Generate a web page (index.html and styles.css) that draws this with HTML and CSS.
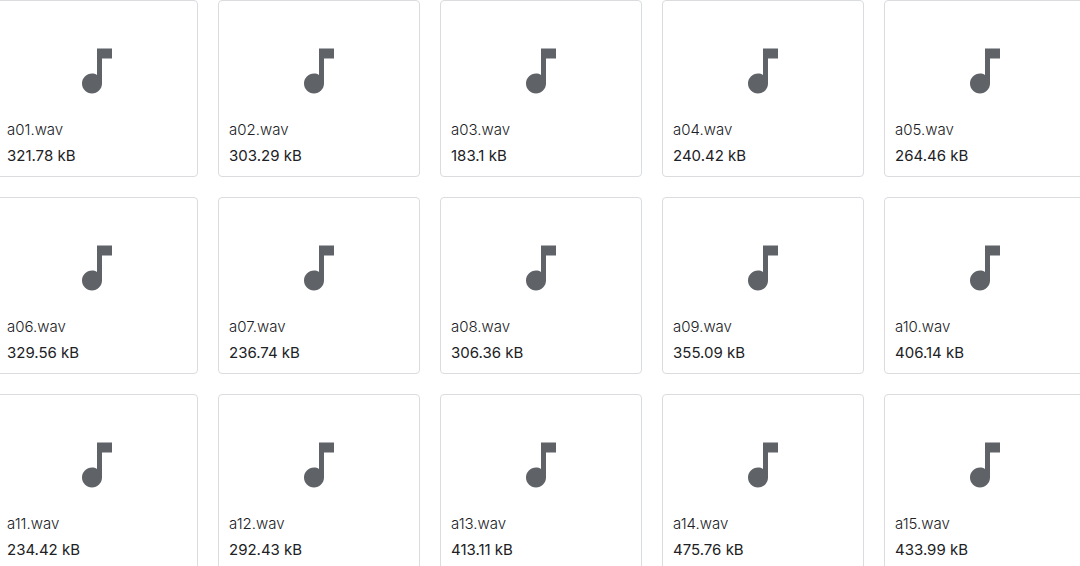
FILE: index.html
```html
<!DOCTYPE html>
<html lang="en">
<head>
  <meta charset="UTF-8">
  <meta name="viewport" content="width=device-width, initial-scale=1.0">
  <title>Audio files</title>
  <link rel="stylesheet" href="styles.css">
</head>
<body>
  <!-- Note icon shared by every card -->
  <svg class="sprite" aria-hidden="true">
    <symbol id="note" viewBox="0 0 24 24">
      <path d="M12 3v10.55c-.59-.34-1.27-.55-2-.55-2.21 0-4 1.79-4 4s1.79 4 4 4 4-1.79 4-4V7h4V3h-6z"/>
    </symbol>
  </svg>

  <main class="file-grid" id="fileGrid"></main>

  <script>
    const files = [
      ['a01.wav', '321.78 kB'],
      ['a02.wav', '303.29 kB'],
      ['a03.wav', '183.1 kB'],
      ['a04.wav', '240.42 kB'],
      ['a05.wav', '264.46 kB'],
      ['a06.wav', '329.56 kB'],
      ['a07.wav', '236.74 kB'],
      ['a08.wav', '306.36 kB'],
      ['a09.wav', '355.09 kB'],
      ['a10.wav', '406.14 kB'],
      ['a11.wav', '234.42 kB'],
      ['a12.wav', '292.43 kB'],
      ['a13.wav', '413.11 kB'],
      ['a14.wav', '475.76 kB'],
      ['a15.wav', '433.99 kB'],
    ];

    document.getElementById('fileGrid').innerHTML = files.map(([name, size]) => `
      <article class="file-card">
        <div class="preview">
          <svg class="note-icon" aria-hidden="true"><use href="#note"/></svg>
        </div>
        <p class="file-name">${name}</p>
        <p class="file-size">${size}</p>
      </article>`).join('');
  </script>
</body>
</html>
```

FILE: styles.css
```css
* {
  box-sizing: border-box;
}

body {
  margin: 0;
  background-color: #fff;
  color: #202124;
  font-family: Inter, sans-serif;
  font-size: 15px;
  line-height: 20px;
  overflow: hidden;
}

.sprite {
  display: none;
}

/* the grid runs a little past both sides of the window */
.file-grid {
  display: grid;
  grid-template-columns: repeat(5, 1fr);
  gap: 20px;
  margin: 0 -6px 0 -4px;
}

.file-card {
  padding: 0 10px 10px;
  border: 1px solid #dadce0;
  border-radius: 4px;
}

.preview {
  display: flex;
  justify-content: center;
  padding: 40px 0 19px;
}

.note-icon {
  width: 60px;
  height: 60px;
  fill: #5f6368;
}

.file-name,
.file-size {
  margin: 0;
}

.file-name {
  margin-bottom: 6px;
  font-weight: 300;
}
```
